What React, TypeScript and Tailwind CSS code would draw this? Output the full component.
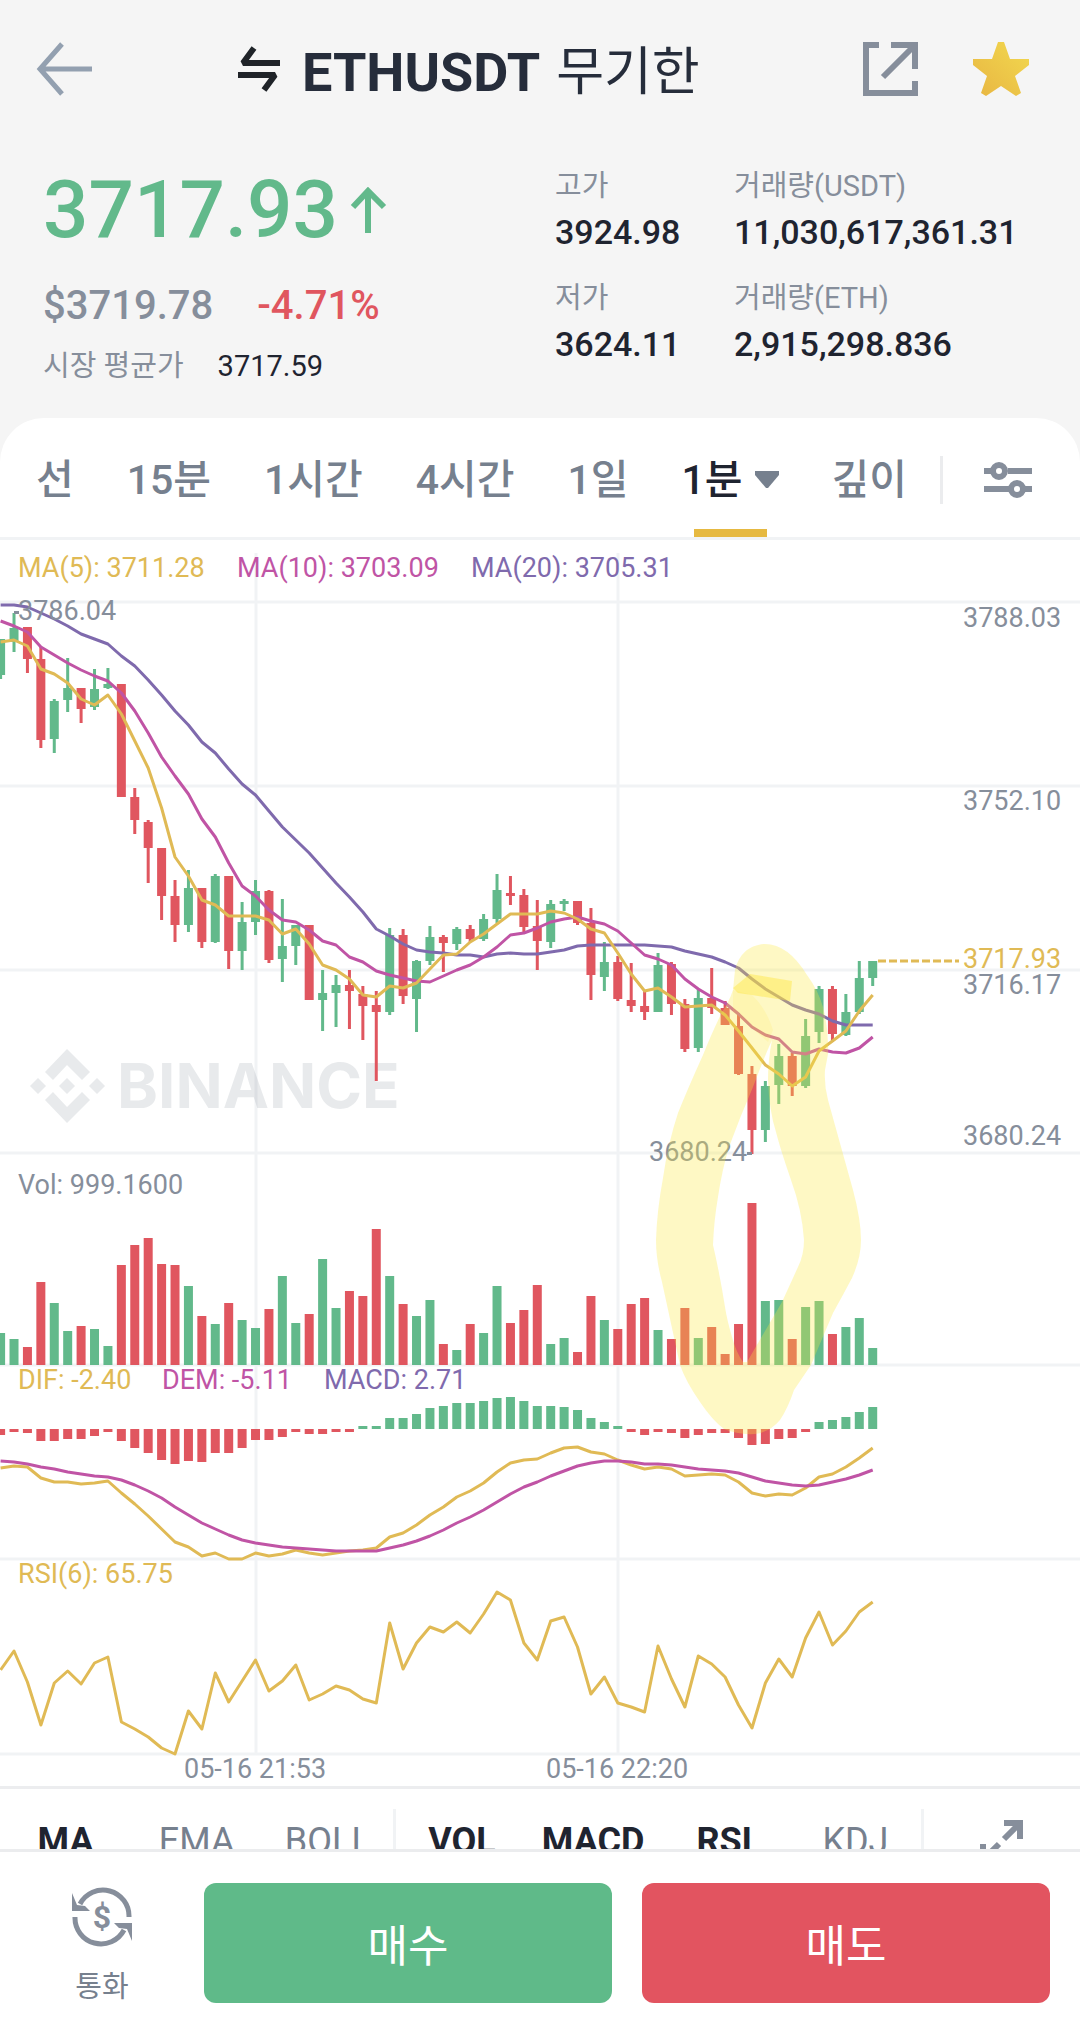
import type { ReactNode } from "react";

const GREEN = "#62b98b";
const RED = "#e0565f";
const YELLOW = "#e0ba55";
const PINK = "#c054a5";
const PURPLE = "#7f6aad";
const GRID = "#f1f3f5";
const GRAY = "#868e9b";

// up, body top, body bottom, high, low, volume, macd
type Candle = [0 | 1, number, number, number, number, number, number];

const candles: Candle[] = [
  [1, 99, 135, 99, 139, 32, -6],
  [1, 88, 102, 73, 112, 26, -3],
  [0, 87, 119, 87, 133, 18, -4],
  [0, 119, 200, 107, 208, 83, -12],
  [1, 161, 199, 159, 213, 62, -12],
  [1, 148, 160, 118, 172, 34, -10],
  [0, 148, 169, 148, 183, 39, -10],
  [1, 149, 167, 129, 170, 36, -7],
  [1, 144, 148, 128, 149, 19, -3],
  [0, 144, 257, 144, 257, 100, -12],
  [0, 257, 280, 248, 294, 120, -19],
  [0, 282, 308, 280, 343, 127, -24],
  [0, 308, 356, 308, 380, 101, -31],
  [0, 356, 385, 340, 402, 100, -35],
  [1, 348, 385, 330, 392, 79, -32],
  [0, 348, 402, 348, 408, 49, -33],
  [1, 336, 402, 334, 403, 41, -24],
  [0, 336, 411, 336, 429, 62, -24],
  [1, 382, 411, 362, 430, 45, -19],
  [1, 351, 382, 340, 395, 37, -11],
  [0, 351, 420, 350, 423, 56, -11],
  [1, 406, 419, 359, 442, 89, -8],
  [1, 385, 406, 385, 425, 42, -3],
  [0, 385, 460, 385, 460, 51, -5],
  [1, 453, 460, 430, 491, 106, -5],
  [1, 445, 453, 435, 487, 57, -3],
  [0, 445, 451, 430, 489, 74, -3],
  [0, 454, 466, 446, 500, 69, 3],
  [0, 465, 472, 451, 541, 136, 3],
  [1, 395, 472, 388, 475, 89, 11],
  [0, 395, 456, 389, 464, 61, 11],
  [1, 421, 459, 420, 492, 49, 15],
  [1, 397, 421, 386, 425, 65, 21],
  [0, 397, 403, 395, 432, 21, 23],
  [1, 389, 404, 387, 410, 15, 26],
  [0, 389, 399, 385, 402, 41, 26],
  [1, 379, 399, 374, 401, 32, 28],
  [1, 350, 379, 334, 383, 79, 31],
  [0, 353, 356, 336, 365, 42, 32],
  [0, 355, 387, 349, 392, 55, 28],
  [0, 386, 401, 360, 430, 80, 23],
  [1, 364, 402, 360, 408, 21, 23],
  [1, 361, 364, 359, 371, 27, 22],
  [0, 361, 383, 361, 385, 13, 19],
  [0, 383, 435, 368, 460, 69, 11],
  [1, 422, 437, 402, 451, 45, 7],
  [0, 422, 459, 416, 461, 36, 3],
  [0, 460, 466, 423, 472, 61, -3],
  [0, 466, 472, 450, 480, 67, -6],
  [1, 425, 472, 413, 472, 35, -3],
  [0, 424, 464, 422, 475, 26, -4],
  [0, 464, 509, 459, 512, 57, -9],
  [1, 458, 508, 449, 512, 27, -6],
  [0, 458, 468, 428, 474, 38, -4],
  [0, 468, 485, 461, 485, 11, -4],
  [0, 486, 534, 473, 535, 41, -9],
  [0, 534, 590, 526, 614, 162, -16],
  [1, 546, 590, 541, 602, 64, -15],
  [1, 516, 545, 504, 564, 65, -10],
  [0, 516, 546, 513, 556, 26, -9],
  [1, 496, 546, 479, 548, 58, -3],
  [1, 449, 492, 446, 503, 64, 7],
  [0, 449, 494, 446, 502, 31, 9],
  [1, 472, 495, 454, 496, 38, 12],
  [1, 438, 472, 421, 474, 47, 17],
  [1, 421, 438, 421, 446, 17, 22],
];

const ma5 = [
  102, 100, 106, 129, 134, 143, 159, 165, 155, 174, 201, 228, 268, 317, 336, 360, 365, 376, 376, 376, 380, 394,
  389, 404, 425, 430, 439, 455, 457, 446, 448, 443, 429, 415, 414, 402, 394, 384, 374, 374, 374, 371, 373, 379,
  389, 393, 413, 434, 451, 448, 457, 467, 466, 465, 475, 491, 508, 525, 534, 546, 537, 511, 501, 491, 471, 455,
];
const ma10 = [
  81, 86, 92, 107, 115, 123, 130, 136, 141, 153, 171, 193, 217, 236, 254, 279, 297, 323, 346, 356, 370, 380,
  382, 390, 401, 405, 417, 422, 431, 435, 438, 441, 442, 436, 430, 425, 417, 407, 395, 393, 388, 382, 379, 377,
  381, 384, 391, 403, 415, 419, 425, 439, 449, 457, 463, 474, 487, 495, 499, 512, 514, 509, 512, 513, 508, 497,
];
const ma20 = [
  65, 65, 67, 73, 79, 86, 94, 99, 104, 116, 126, 140, 155, 171, 185, 202, 213, 229, 244, 255, 271, 287,
  300, 313, 328, 343, 357, 372, 389, 396, 404, 410, 412, 413, 415, 415, 417, 414, 413, 414, 414, 412, 410, 406,
  405, 405, 405, 405, 405, 406, 407, 411, 414, 417, 422, 428, 439, 449, 457, 465, 470, 474, 481, 485, 485, 485,
];
const dif = [
  928, 926, 927, 938, 942, 942, 944, 943, 941, 953, 964, 976, 989, 1002, 1007, 1016, 1013, 1019, 1019, 1013,
  1016, 1014, 1010, 1013, 1015, 1013, 1011, 1010, 1008, 997, 993, 985, 975, 967, 957, 951, 943, 932, 923, 920,
  919, 913, 908, 907, 912, 914, 920, 925, 929, 927, 929, 936, 935, 934, 935, 942, 953, 956, 954, 955, 948, 937,
  934, 927, 918, 908,
];
const dem = [
  921, 922, 924, 927, 929, 932, 934, 936, 937, 940, 945, 951, 958, 967, 975, 983, 989, 995, 1000, 1003, 1005,
  1007, 1008, 1009, 1010, 1011, 1011, 1011, 1011, 1008, 1005, 1001, 996, 990, 983, 977, 970, 962, 954, 947,
  942, 936, 931, 926, 923, 921, 921, 922, 924, 924, 925, 927, 929, 930, 931, 933, 937, 941, 943, 945, 946, 945,
  942, 939, 935, 930,
];
const rsi = [
  1130, 1111, 1142, 1185, 1143, 1131, 1144, 1123, 1117, 1182, 1189, 1197, 1208, 1214, 1171, 1189, 1133, 1162,
  1141, 1120, 1151, 1141, 1125, 1160, 1154, 1146, 1150, 1159, 1163, 1083, 1129, 1103, 1087, 1092, 1082, 1093,
  1074, 1052, 1060, 1103, 1120, 1081, 1077, 1107, 1154, 1137, 1163, 1167, 1172, 1106, 1139, 1167, 1116, 1124,
  1137, 1165, 1188, 1143, 1119, 1137, 1098, 1072, 1105, 1091, 1072, 1062,
];

const xAt = (i: number) => 0.6 + i * 13.417;

function Line({ values, color }: { values: number[]; color: string }) {
  const points = values.map((y, i) => `${xAt(i).toFixed(1)},${y}`).join(" ");
  return <polyline points={points} fill="none" stroke={color} strokeWidth={3} strokeLinejoin="round" />;
}

function Chart() {
  return (
    <svg
      viewBox="0 0 1080 1249"
      className="block h-auto w-full font-['Roboto','Noto_Sans_CJK_KR',sans-serif] text-[27px]"
      role="img"
      aria-label="ETHUSDT 1분 차트"
    >
      <g stroke={GRID} strokeWidth={3}>
        {[62, 246, 430, 613, 825, 1019, 1214].map((y) => (
          <line key={y} x1={0} x2={1080} y1={y} y2={y} />
        ))}
        <line x1={256} x2={256} y1={13} y2={1214} />
        <line x1={618} x2={618} y1={13} y2={1214} />
      </g>

      {/* watermark */}
      <g fill="#5b6776" fillOpacity={0.14}>
        <path d="M67 509 90 532 82 540 67 525 53 540 45 532ZM38 538 46 546 38 554 30 546ZM67 538 75 546 67 554 59 546ZM97 538 105 546 97 554 89 546ZM53 552 67 567 82 552 90 560 67 583 45 560Z" />
        <text x={117} y={568} className="font-['Inter',sans-serif] text-[62px] font-bold">
          BINANCE
        </text>
      </g>

      {candles.map(([up, top, bottom, high, low, volume, macd], i) => {
        const x = xAt(i);
        const color = up ? GREEN : RED;
        return (
          <g key={i} fill={color}>
            <rect x={x - 1.5} y={high} width={3} height={low - high} />
            <rect x={x - 4.5} y={top} width={9} height={bottom - top} />
            <rect x={x - 4.5} y={825 - volume} width={9} height={volume} />
            <rect
              x={x - 4.5}
              y={macd > 0 ? 889 - macd : 889}
              width={9}
              height={Math.abs(macd)}
              fill={macd > 0 ? GREEN : RED}
            />
          </g>
        );
      })}

      <Line values={ma20} color={PURPLE} />
      <Line values={ma10} color={PINK} />
      <Line values={ma5} color={YELLOW} />
      <Line values={dif} color={YELLOW} />
      <Line values={dem} color={PINK} />
      <Line values={rsi} color={YELLOW} />

      <line x1={878} x2={959} y1={421} y2={421} stroke={YELLOW} strokeWidth={3} strokeDasharray="8 3" />

      <g fill={YELLOW}>
        <text x={18} y={37}>MA(5): 3711.28</text>
        <text x={18} y={849}>DIF: -2.40</text>
        <text x={18} y={1043}>RSI(6): 65.75</text>
        <text x={963} y={428}>3717.93</text>
      </g>
      <g fill={PINK}>
        <text x={237} y={37}>MA(10): 3703.09</text>
        <text x={162} y={849}>DEM: -5.11</text>
      </g>
      <g fill={PURPLE}>
        <text x={471} y={37}>MA(20): 3705.31</text>
        <text x={324} y={849}>MACD: 2.71</text>
      </g>
      <g fill={GRAY}>
        <text x={18} y={80}>3786.04</text>
        <text x={18} y={654}>Vol: 999.1600</text>
        <text x={649} y={621}>3680.24</text>
        <text x={963} y={87}>3788.03</text>
        <text x={963} y={270}>3752.10</text>
        <text x={963} y={454}>3716.17</text>
        <text x={963} y={605}>3680.24</text>
        <text x={184} y={1238}>05-16 21:53</text>
        <text x={546} y={1238}>05-16 22:20</text>
        <rect x={14} y={71} width={5} height={3} />
        <rect x={747} y={612} width={5} height={3} />
      </g>

      {/* hand drawn marker */}
      <path
        fill="#fce941"
        fillOpacity={0.31}
        fillRule="evenodd"
        d="M765 404C748 405 739 415 735 430L733 450Q729 462 722 472Q710 497 703 515Q688 548 678 573Q668 603 663 638Q657 670 656 700Q656 720 662 742L680 825Q686 842 700 862Q712 880 724 889Q738 895 755 894Q770 892 780 880Q788 868 794 850L811 825L833 773Q843 755 852 738Q861 718 861 700Q861 680 853 650L828 560Q824 545 825 530L828 514Q829 490 823 467Q818 450 807 435Q788 404 765 404ZM772 500Q768 520 768 540Q769 570 776 592Q780 608 791 640Q802 670 804 700Q804 715 798 727L782 762L747 822L743 822Q736 812 732 797Q727 780 725 767Q720 735 713 705Q714 680 718 657Q722 630 729 607Q740 577 753 547Q763 520 772 500Z"
      />
      <path fill="#ffe740" fillOpacity={0.45} d="M733 448 750 434 792 441 790 461 752 455 738 453Z" />
      <path fill="#fce541" fillOpacity={0.14} d="M733 450 752 455Q766 468 773 490L768 502 733 472Z" />

      <rect x={0} y={1246} width={1080} height={3} fill="#ecedef" />
    </svg>
  );
}

function Stat({ label, value }: { label: string; value: string }) {
  return (
    <div>
      <dt className="text-[29px] leading-10 text-[#868e9b]">{label}</dt>
      <dd className="mt-1 text-[34px] leading-11 font-medium text-[#1f2430]">{value}</dd>
    </div>
  );
}

function Header() {
  return (
    <header className="font-normal">
      <div className="flex h-[142px] items-center pr-[50px] pl-9">
        <button type="button" aria-label="뒤로" className="mb-1">
          <svg width="56" height="54" viewBox="0 0 56 54" fill="none" stroke="#93a0b0" strokeWidth="5">
            <path d="M56 27H4M26 2 4 27 26 52" />
          </svg>
        </button>
        <h1 className="mt-1 ml-36 flex items-center text-[#262d3b]">
          <svg
            width="46"
            height="46"
            viewBox="0 0 46 46"
            fill="none"
            stroke="#1f2328"
            strokeWidth="6"
            strokeLinejoin="bevel"
            className="mr-5 mb-2"
          >
            <path d="M44 17H7L18 2M2 29H39L28 44" />
          </svg>
          <span className="text-[54px] leading-[60px] font-bold">ETHUSDT</span>
          <span className="ml-4 text-[52px] leading-[60px]">무기한</span>
        </h1>
        <div className="mb-1 ml-auto flex items-center gap-[54px]">
          <button type="button" aria-label="공유">
            <svg width="55" height="54" viewBox="0 0 55 54" fill="none" stroke="#868e9b" strokeWidth="6">
              <path d="M16 3H3V51H52V39M28 3H52V27M51 4 20 35" />
            </svg>
          </button>
          <button type="button" aria-label="즐겨찾기">
            <svg width="58" height="56" viewBox="0 0 58 56">
              <defs>
                <linearGradient id="star" x1="1" y1="0" x2="0" y2="1">
                  <stop offset="0" stopColor="#f2d94f" />
                  <stop offset="1" stopColor="#e8b542" />
                </linearGradient>
              </defs>
              <path
                fill="url(#star)"
                d="M26 1H32L38 18H57V24L43 35 49 52 44 55 29 45 14 55 9 52 15 35 1 24V18H20Z"
              />
            </svg>
          </button>
        </div>
      </div>

      <div className="flex h-[276px] pt-5 pr-14 pl-[43px]">
        <div className="flex-1">
          <div className="flex items-center text-[#62b98b]">
            <span className="text-[80px] leading-24 font-medium">3717.93</span>
            <svg width="37" height="46" viewBox="0 0 37 46" fill="none" stroke="currentColor" strokeWidth="6" className="ml-3">
              <path d="M18 46V4M3 20 18 4 34 20" />
            </svg>
          </div>
          <div className="mt-6 flex gap-11 text-[40px] leading-12 font-medium">
            <span className="text-[#868e9b]">$3719.78</span>
            <span className="text-[#e0565f]">-4.71%</span>
          </div>
          <div className="mt-4 flex gap-[34px] text-[29px] leading-10">
            <span className="text-[#868e9b]">시장 평균가</span>
            <span className="text-[#1f2430]">3717.59</span>
          </div>
        </div>
        <dl className="grid grid-cols-[179px_290px] content-start gap-y-6 pt-1">
          <Stat label="고가" value="3924.98" />
          <Stat label="거래량(USDT)" value="11,030,617,361.31" />
          <Stat label="저가" value="3624.11" />
          <Stat label="거래량(ETH)" value="2,915,298.836" />
        </dl>
      </div>
    </header>
  );
}

function IntervalTabs() {
  return (
    <nav className="flex h-[122px] items-center justify-between border-b-3 border-[#f1f3f5] pt-1 pr-12 pl-9 text-[41px] leading-12 font-medium text-[#76808e]">
      <button type="button">선</button>
      <button type="button">15분</button>
      <button type="button">1시간</button>
      <button type="button">4시간</button>
      <button type="button">1일</button>
      <button type="button" className="relative flex h-[115px] items-center gap-3 text-[#1f2430]" aria-current="true">
        1분
        <svg width="24" height="17" viewBox="0 0 24 17" fill="#76808e">
          <path d="M0 0H24V4L13 17H11L0 4Z" />
        </svg>
        <span className="absolute inset-x-3 bottom-0 h-2 bg-[#e6b941]" />
      </button>
      <button type="button">깊이</button>
      <span className="-mr-3 -ml-5 h-12 w-[3px] bg-[#ebecee]" />
      <button type="button" aria-label="설정">
        <svg width="48" height="36" viewBox="0 0 48 36" fill="none" stroke="#868e9b" strokeWidth="6">
          <path d="M0 9H8M24 9H48M0 27H25M41 27H48" />
          <circle cx="15" cy="9" r="6" />
          <circle cx="33" cy="27" r="6" />
        </svg>
      </button>
    </nav>
  );
}

function Indicator({ active, children }: { active?: boolean; children: ReactNode }) {
  return (
    <button type="button" className={active ? "flex-1 font-bold text-[#1f2430]" : "flex-1 text-[#76808e]"}>
      {children}
    </button>
  );
}

function IndicatorBar() {
  return (
    <div className="h-[60px] overflow-hidden">
      <div className="flex items-start pt-5 text-[36px] leading-16">
        <Indicator active>MA</Indicator>
        <Indicator>EMA</Indicator>
        <Indicator>BOLL</Indicator>
        <span className="h-12 w-[3px] bg-[#f1f3f5]" />
        <Indicator active>VOL</Indicator>
        <Indicator active>MACD</Indicator>
        <Indicator active>RSI</Indicator>
        <Indicator>KDJ</Indicator>
        <span className="h-12 w-[3px] bg-[#f1f3f5]" />
        <button type="button" aria-label="전체 화면" className="flex h-16 w-[156px] items-center justify-center">
          <svg width="43" height="43" viewBox="0 0 43 43" fill="none" stroke="#868e9b" strokeWidth="6">
            <path d="M24 3H40V19M40 3 24 19M3 24V40H19M3 40 19 24" />
          </svg>
        </button>
      </div>
    </div>
  );
}

function TradeBar() {
  return (
    <footer className="flex items-start gap-[30px] border-t-3 border-[#ebecee] px-[30px] pt-[31px] pb-8 text-[44px] text-white">
      <button type="button" className="mt-1 flex w-36 flex-col items-center gap-5 text-[29px] leading-10 text-[#76808e]">
        <svg width="60" height="60" viewBox="0 0 60 60" fill="none" stroke="#868e9b" strokeWidth="5">
          <path d="M8 17A26 26 0 0 1 57 30M3 30A26 26 0 0 0 52 43" />
          <path d="M0 6 0 24H18L13 19 5 18ZM60 54V36H42L47 41 55 42Z" fill="#868e9b" stroke="none" />
          <text
            x="30"
            y="41"
            textAnchor="middle"
            fill="#868e9b"
            stroke="none"
            className="font-['Roboto',sans-serif] text-[32px] font-bold"
          >
            $
          </text>
        </svg>
        통화
      </button>
      <button type="button" className="h-[120px] flex-1 rounded-xl bg-[#5fba89] pt-2">
        매수
      </button>
      <button type="button" className="h-[120px] flex-1 rounded-xl bg-[#e25460] pt-2">
        매도
      </button>
    </footer>
  );
}

export default function App() {
  return (
    <div className="min-h-screen bg-[#f5f5f5] font-['Roboto','Noto_Sans_CJK_KR',sans-serif]">
      <Header />
      <main className="rounded-t-[44px] bg-white">
        <IntervalTabs />
        <Chart />
        <IndicatorBar />
        <TradeBar />
      </main>
    </div>
  );
}
